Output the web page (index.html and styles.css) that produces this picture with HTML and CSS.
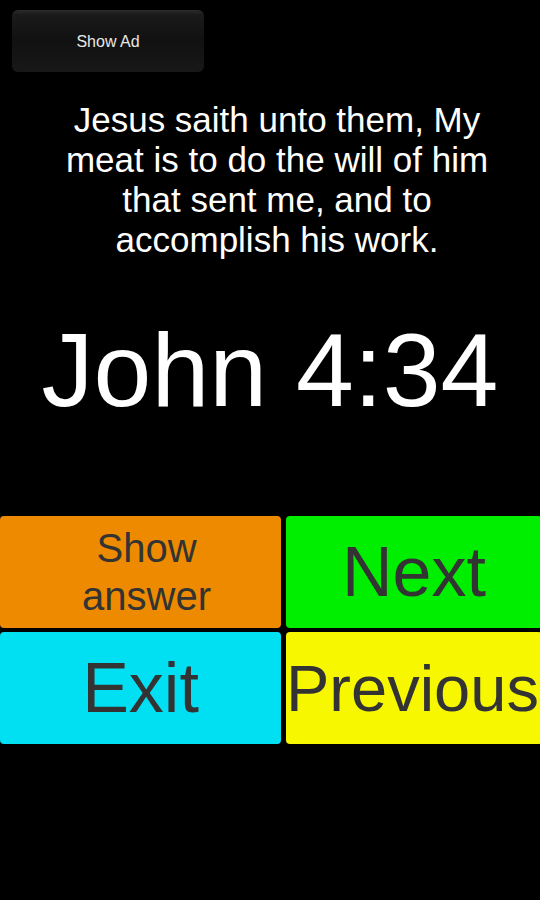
FILE: index.html
```html
<!DOCTYPE html>
<html lang="en">
    <head>
        <meta charset="UTF-8">
        <meta name="viewport" content="width=device-width, initial-scale=1.0">
        <link rel="stylesheet" href="styles.css">
        <title>Verse</title>
    </head>
    <body>
        <div class="top">
            <button class="ad-button">Show Ad</button>
        </div>

        <p class="verse">Jesus saith unto them, My meat is to do the will of him that sent me, and to accomplish his work.</p>

        <h1 class="ref">John 4:34</h1>

        <div class="controls">
            <button class="btn btn-answer"><span>Show<br>answer</span></button>
            <button class="btn btn-next"><span>Next</span></button>
            <button class="btn btn-exit"><span>Exit</span></button>
            <button class="btn btn-prev"><span>Previous</span></button>
        </div>
    </body>
</html>
```

FILE: styles.css
```css
body {
    font-family: "Liberation Sans", Arial, sans-serif;
    background: #000;
    color: #fff;
    margin: 0;
    width: 540px;
    height: 900px;
    overflow: hidden;
}

.top {
    padding: 10px 12px 0;
}

.ad-button {
    width: 192px;
    height: 62px;
    padding: 2px 0 0;
    border: none;
    border-radius: 6px;
    background: linear-gradient(#2c2c2c 0%, #1a1a1a 8%, #111 50%, #181818 100%);
    color: #e8e8e8;
    font-family: "Liberation Sans", Arial, sans-serif;
    font-size: 16px;
}

.verse {
    margin: 28px 43px 0 57px;
    font-size: 35px;
    line-height: 40px;
    text-align: center;
}

.ref {
    margin: 50px 0 0;
    font-weight: normal;
    font-size: 104px;
    line-height: 120px;
    text-align: center;
}

.controls {
    margin-top: 86px;
    display: grid;
    grid-template-columns: 281px 256px;
    grid-auto-rows: 112px;
    column-gap: 5px;
    row-gap: 4px;
}

.btn {
    border: none;
    border-radius: 4px;
    color: #333;
    font-family: "Liberation Sans", Arial, sans-serif;
    padding: 0;
    display: flex;
    align-items: center;
    justify-content: center;
    white-space: nowrap;
    overflow: hidden;
}

.btn-answer {
    background: #ee8a00;
    padding-left: 12px;
    font-size: 40px;
    line-height: 48px;
}

.btn-next {
    background: #00ee00;
    font-size: 70px;
}

.btn-exit {
    background: #00e0f2;
    font-size: 70px;
}

.btn-prev {
    background: #f7f700;
    justify-content: flex-start;
    font-size: 65px;
}
```
